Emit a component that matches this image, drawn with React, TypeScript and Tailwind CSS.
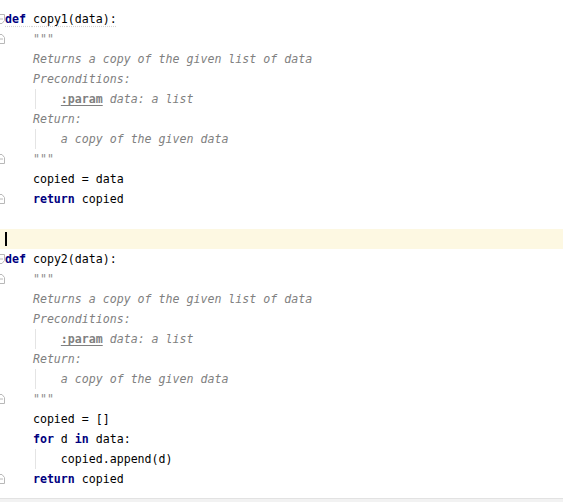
import React from "react";

const KW = "text-[#000080] font-bold";
const DOC = "text-[#808080] italic";
const QUOTE = "text-[#8c8c8c] italic";

function FoldIcon({ kind }: { kind: "open" | "close" }) {
  return (
    <svg
      width="6"
      height="10"
      viewBox="0 0 6 10"
      className="absolute left-0 top-[5px]"
    >
      {kind === "open" ? (
        <path d="M-3 0.5 H4.5 V6.5 L2 9.5 H-3" fill="#fff" stroke="#b8b8b8" strokeWidth="1" />
      ) : (
        <path d="M-3 9.5 H4.5 V3.5 L2 0.5 H-3" fill="#fff" stroke="#b8b8b8" strokeWidth="1" />
      )}
      <path d="M-1 5 H3" stroke="#b8b8b8" strokeWidth="1" />
    </svg>
  );
}

function Line({
  indent = 0,
  children,
  fold,
  guide,
  current,
}: {
  indent?: number;
  children?: React.ReactNode;
  fold?: "open" | "close";
  guide?: boolean;
  current?: boolean;
}) {
  return (
    <div className={`relative h-[20px] flex items-center ${current ? "bg-[#fdf8e2]" : ""}`}>
      {fold && <FoldIcon kind={fold} />}
      {guide && <div className="absolute left-[35px] top-0 h-[20px] w-px bg-[#e4e4e4]" />}
      {current && <div className="absolute left-[5px] top-[3px] h-[14px] w-[2px] bg-black" />}
      <div className="pl-[5px] mt-[2px] whitespace-pre">
        {" ".repeat(indent)}
        {children}
      </div>
    </div>
  );
}

function Func({ name, body }: { name: string; body: React.ReactNode }) {
  return (
    <>
      <Line fold="open">
        <span className={name === "copy1" ? "underline decoration-dotted decoration-[#d4d4d4] underline-offset-[3px]" : ""}>
          <span className={KW}>def</span> {name}(data):
        </span>
      </Line>
      <Line indent={4} fold="close">
        <span className={QUOTE}>"""</span>
      </Line>
      <Line indent={4}>
        <span className={DOC}>Returns a copy of the given list of data</span>
      </Line>
      <Line indent={4}>
        <span className={DOC}>Preconditions:</span>
      </Line>
      <Line indent={8} guide>
        <span className="text-[#808080] font-bold underline underline-offset-[2px]">:param</span>
        <span className={DOC}> data: a list</span>
      </Line>
      <Line indent={4}>
        <span className={DOC}>Return:</span>
      </Line>
      <Line indent={8} guide>
        <span className={DOC}>a copy of the given data</span>
      </Line>
      <Line indent={4} fold="close">
        <span className={QUOTE}>"""</span>
      </Line>
      {body}
    </>
  );
}

export default function App() {
  return (
    <div className="w-[563px] h-[502px] bg-white flex flex-col overflow-hidden font-['DejaVu_Sans_Mono',monospace] text-[11.6px] text-black">
      <div className="flex-1 pt-[9px]">
        <Func
          name="copy1"
          body={
            <>
              <Line indent={4}>copied = data</Line>
              <Line indent={4} fold="close">
                <span className={KW}>return</span> copied
              </Line>
            </>
          }
        />
        <Line />
        <Line current />
        <Func
          name="copy2"
          body={
            <>
              <Line indent={4}>copied = []</Line>
              <Line indent={4}>
                <span className={KW}>for</span> d <span className={KW}>in</span> data:
              </Line>
              <Line indent={8} guide>copied.append(d)</Line>
              <Line indent={4} fold="close">
                <span className={KW}>return</span> copied
              </Line>
            </>
          }
        />
      </div>
      <div className="h-[4px] border-t border-[#e2e2e2] bg-[#f2f2f2]" />
    </div>
  );
}
